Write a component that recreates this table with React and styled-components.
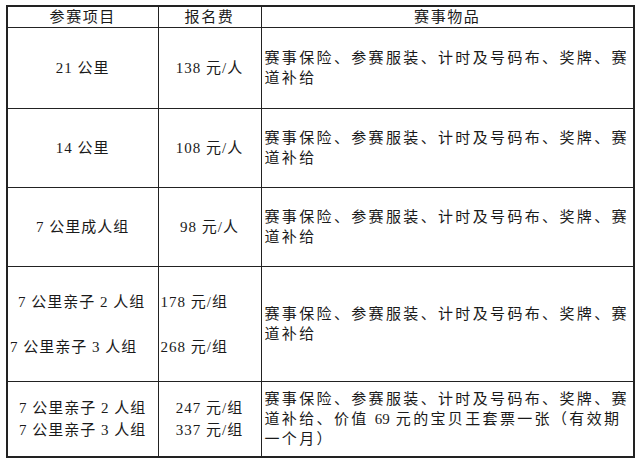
import React from "react";
import styled, { createGlobalStyle } from "styled-components";

const GlobalStyle = createGlobalStyle`
  html, body {
    margin: 0;
    padding: 0;
    background: #ffffff;
  }
  body {
    font-family: "Liberation Serif", "Noto Sans CJK SC", serif;
    color: #1a1a1a;
  }
`;

const basic = ["赛事保险、参赛服装、计时及号码布、奖牌、赛道补给"];

const rows = [
  { name: ["21 公里"], fee: ["138 元/人"], goods: basic, height: 80 },
  { name: ["14 公里"], fee: ["108 元/人"], goods: basic, height: 78 },
  { name: ["7 公里成人组"], fee: ["98 元/人"], goods: basic, height: 78 },
  {
    name: ["7 公里亲子 2 人组", "7 公里亲子 3 人组"],
    fee: ["178 元/组", "268 元/组"],
    goods: basic,
    height: 114,
    loose: true,
  },
  {
    name: ["7 公里亲子 2 人组", "7 公里亲子 3 人组"],
    fee: ["247 元/组", "337 元/组"],
    goods: ["赛事保险、参赛服装、计时及号码布、奖牌、赛道补给、价值 ", "69", " 元的宝贝王套票一张（有效期一个月）"],
    height: 74,
  },
];

const Page = styled.div`
  padding: 5px 0 0 6px;
`;

const Table = styled.table`
  border-collapse: collapse;
  width: 627px;
  table-layout: fixed;
  border: 2px solid #222;
  font-size: 15px;
`;

const HeadCell = styled.th`
  border: 1.5px solid #222;
  height: 20px;
  padding: 0;
  font-weight: normal;
  text-align: center;
  letter-spacing: 1.6px;
  line-height: 20px;
`;

const Cell = styled.td`
  border: 1.5px solid #222;
  padding: 0 2px;
  height: ${(p) => p.$h}px;
  text-align: center;
  vertical-align: middle;
  line-height: 20px;
  letter-spacing: 1px;
`;

const Goods = styled.td`
  border: 1.5px solid #222;
  padding: 0 2px 0 3px;
  vertical-align: middle;
  line-height: 20px;
  letter-spacing: 2.35px;
  text-align: left;
`;

const Num = styled.span`
  letter-spacing: 0;
`;

const Lines = styled.div`
  display: flex;
  flex-direction: column;
  align-items: ${(p) => (p.$loose ? "flex-start" : "center")};
  gap: ${(p) => (p.$loose ? "25px" : "2px")};
`;

const Line = styled.span`
  white-space: nowrap;
  padding-left: ${(p) => p.$pad || 0}px;
`;

export default function App() {
  return (
    <>
      <GlobalStyle />
      <Page>
        <Table>
          <colgroup>
            <col style={{ width: 151 }} />
            <col style={{ width: 103 }} />
            <col style={{ width: 373 }} />
          </colgroup>
          <thead>
            <tr>
              <HeadCell>参赛项目</HeadCell>
              <HeadCell>报名费</HeadCell>
              <HeadCell>赛事物品</HeadCell>
            </tr>
          </thead>
          <tbody>
            {rows.map((r, i) => (
              <tr key={i}>
                <Cell $h={r.height}>
                  <Lines $loose={r.loose}>
                    {r.name.map((n, j) => (
                      <Line key={j} $pad={r.loose && j === 0 ? 8 : 0}>
                        {n}
                      </Line>
                    ))}
                  </Lines>
                </Cell>
                <Cell $h={r.height}>
                  <Lines $loose={r.loose}>
                    {r.fee.map((f, j) => (
                      <Line key={j}>{f}</Line>
                    ))}
                  </Lines>
                </Cell>
                <Goods>
                  {r.goods.map((g, j) => (j % 2 === 1 ? <Num key={j}>{g}</Num> : g))}
                </Goods>
              </tr>
            ))}
          </tbody>
        </Table>
      </Page>
    </>
  );
}
